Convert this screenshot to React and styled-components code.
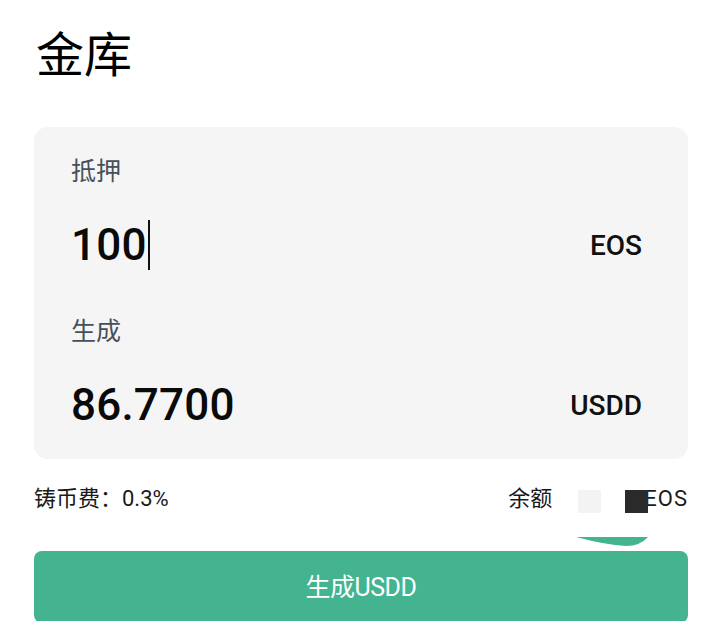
import React from "react";
import styled, { createGlobalStyle } from "styled-components";

const GlobalStyle = createGlobalStyle`
	html, body {
		margin: 0;
		padding: 0;
		background: #fff;
		font-family: Roboto, "Noto Sans CJK SC", sans-serif;
		color: #111;
	}
`;

const Page = styled.div`
	padding: 0 32px 0 34px;
`;

const Title = styled.h1`
	margin: 0;
	padding: 27px 0 0 2px;
	font-size: 48px;
	line-height: 58px;
	font-weight: 400;
	color: #000;
`;

const Card = styled.div`
	margin-top: 42px;
	background: #f5f5f5;
	border-radius: 14px;
	padding: 28px 46px 19px 37px;
	display: flex;
	flex-direction: column;
	gap: 35px;
`;

const Field = styled.div`
	display: flex;
	flex-direction: column;
	gap: 21px;
`;

const Label = styled.div`
	font-size: 25px;
	line-height: 34px;
	color: #46505b;
`;

const ValueRow = styled.div`
	display: flex;
	align-items: center;
	justify-content: space-between;
	height: 70px;
`;

const Amount = styled.span`
	display: flex;
	align-items: center;
	font-size: 44px;
	font-weight: 500;
	color: #0a0a0a;
	letter-spacing: 0.2px;
`;

const Caret = styled.span`
	display: inline-block;
	width: 2px;
	height: 50px;
	margin-left: 1px;
	background: #111;
`;

const Unit = styled.span`
	font-size: 28px;
	font-weight: 500;
	color: #111;
`;

const InfoRow = styled.div`
	margin-top: 25px;
	display: flex;
	align-items: center;
	justify-content: space-between;
	font-size: 22px;
	line-height: 30px;
	color: #1a1a1a;
`;

const Balance = styled.div`
	position: relative;
	display: flex;
	align-items: center;
`;

const Mask = styled.span`
	position: relative;
	z-index: 1;
	display: inline-block;
	width: 23px;
	height: 23px;
	margin-top: 5px;
	margin-left: ${(props) => props.offset}px;
	background: ${(props) => (props.dark ? "#2a2a2a" : "#f3f3f3")};
`;

const BalanceUnit = styled.span`
	margin-left: -4px;
	letter-spacing: 1px;
`;

const Swoosh = styled.svg`
	position: absolute;
	left: 68px;
	top: 52px;
`;

const SubmitButton = styled.button`
	display: flex;
	align-items: center;
	justify-content: center;
	width: 100%;
	height: 72px;
	margin-top: 37px;
	padding: 0 0 4px;
	border: none;
	border-radius: 8px;
	background: #43b48f;
	color: #fff;
	font-family: Roboto, "Noto Sans CJK SC", sans-serif;
	font-size: 25px;
	letter-spacing: -0.5px;
`;

const App = () => {
	return (
		<Page>
			<GlobalStyle />
			<Title>金库</Title>
			<Card>
				<Field>
					<Label>抵押</Label>
					<ValueRow>
						<Amount>
							100
							<Caret />
						</Amount>
						<Unit>EOS</Unit>
					</ValueRow>
				</Field>
				<Field>
					<Label>生成</Label>
					<ValueRow>
						<Amount>86.7700</Amount>
						<Unit>USDD</Unit>
					</ValueRow>
				</Field>
			</Card>
			<InfoRow>
				<span>铸币费：0.3%</span>
				<Balance>
					<span>余额</span>
					<Mask offset={26} />
					<Mask offset={24} dark />
					<BalanceUnit>EOS</BalanceUnit>
					<Swoosh width="72" height="12" viewBox="0 0 72 12">
						<path d="M0 1 L72 1 Q64 10 50 10 Q30 9 0 1 Z" fill="#43b48f" />
					</Swoosh>
				</Balance>
			</InfoRow>
			<SubmitButton>生成USDD</SubmitButton>
		</Page>
	);
};

export default App;
